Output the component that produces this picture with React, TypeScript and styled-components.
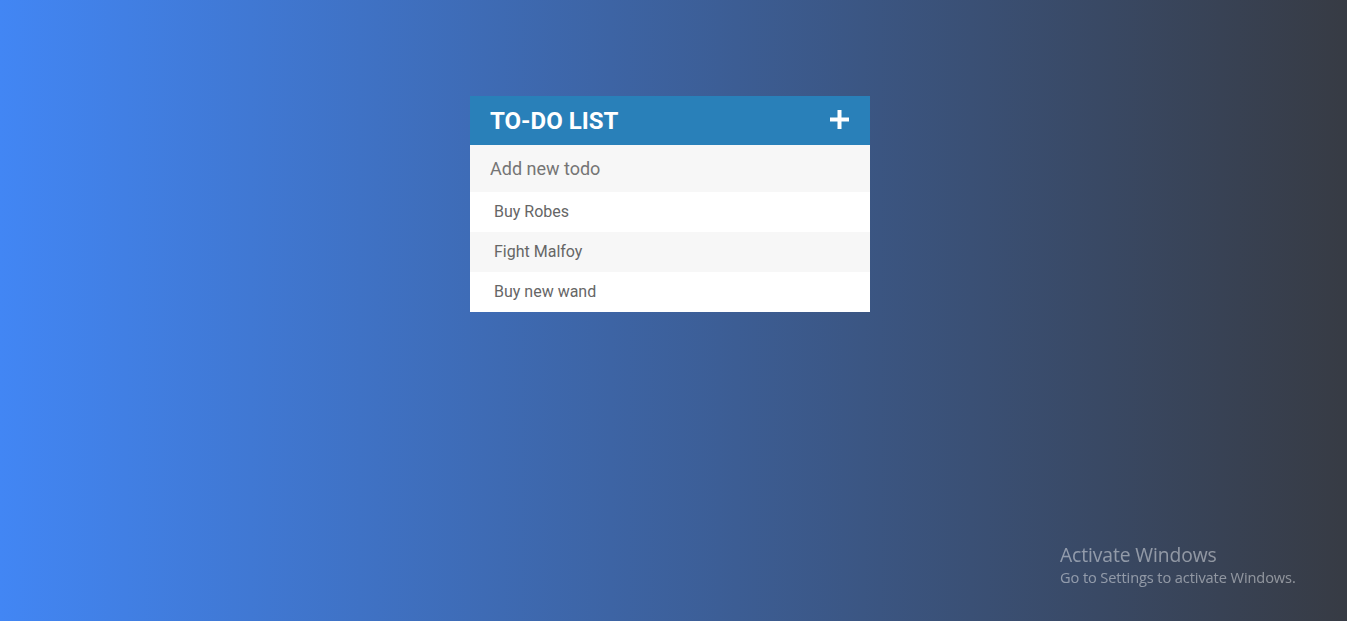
import React from "react";
import styled, { createGlobalStyle } from "styled-components";

const GlobalStyle = createGlobalStyle`
  html, body {
    margin: 0;
    padding: 0;
    height: 100%;
  }
  body {
    font-family: Roboto, "Liberation Sans", sans-serif;
    background: linear-gradient(to right, #4286f4, #373b44);
    min-height: 621px;
    overflow: hidden;
  }
  #root {
    min-height: 621px;
  }
`;

const Page = styled.div`
  min-height: 621px;
  padding-top: 96px;
  box-sizing: border-box;
  display: flex;
  justify-content: center;
  padding-right: 7px;
`;

const Card = styled.div`
  width: 400px;
  background: #f7f7f7;
  align-self: flex-start;
`;

const Header = styled.h1`
  margin: 0;
  height: 49px;
  box-sizing: border-box;
  background: #2980b9;
  color: #fff;
  display: flex;
  align-items: center;
  justify-content: space-between;
  padding: 0 20px 0 20px;
  font-size: 24px;
  font-weight: 700;
  text-transform: uppercase;
  font-family: Roboto, "Liberation Sans", sans-serif;
`;

const PlusButton = styled.span`
  display: flex;
  width: 19px;
  height: 19px;
  margin-right: 1px;
  margin-top: -2px;
`;

const Input = styled.input`
  display: block;
  width: 100%;
  height: 47px;
  box-sizing: border-box;
  border: none;
  outline: none;
  background: #f7f7f7;
  padding: 0 20px;
  font-size: 18px;
  font-family: Roboto, "Liberation Sans", sans-serif;
  color: #2980b9;
  &::placeholder {
    color: #757575;
  }
`;

const List = styled.ul`
  list-style: none;
  margin: 0;
  padding: 0;
`;

const Item = styled.li<{ $alt?: boolean }>`
  height: 40px;
  line-height: 40px;
  background: ${(p) => (p.$alt ? "#f7f7f7" : "#fff")};
  color: #666;
  font-size: 16px;
  padding-left: 24px;
`;

const Watermark = styled.div`
  position: fixed;
  left: 1060px;
  top: 542px;
  font-family: "Open Sans", "Noto Sans", sans-serif;
  color: rgba(255, 255, 255, 0.45);
  display: flex;
  flex-direction: column;
`;

const WmTitle = styled.span`
  font-size: 19.3px;
  line-height: 25px;
  letter-spacing: -0.1px;
`;

const WmSub = styled.span`
  font-size: 14.6px;
  line-height: 20px;
  letter-spacing: -0.1px;
`;

const todos = ["Buy Robes", "Fight Malfoy", "Buy new wand"];

export default function App() {
  return (
    <>
      <GlobalStyle />
      <Page>
        <Card>
          <Header>
            <span>To-Do List</span>
            <PlusButton>
              <svg width="19" height="19" viewBox="0 0 19 19">
                <rect x="7.5" y="0" width="4" height="19" fill="#fff" />
                <rect x="0" y="7.5" width="19" height="4" fill="#fff" />
              </svg>
            </PlusButton>
          </Header>
          <Input type="text" placeholder="Add new todo" />
          <List>
            {todos.map((t, i) => (
              <Item key={t} $alt={i % 2 === 1}>
                {t}
              </Item>
            ))}
          </List>
        </Card>
      </Page>
      <Watermark>
        <WmTitle>Activate Windows</WmTitle>
        <WmSub>Go to Settings to activate Windows.</WmSub>
      </Watermark>
    </>
  );
}
